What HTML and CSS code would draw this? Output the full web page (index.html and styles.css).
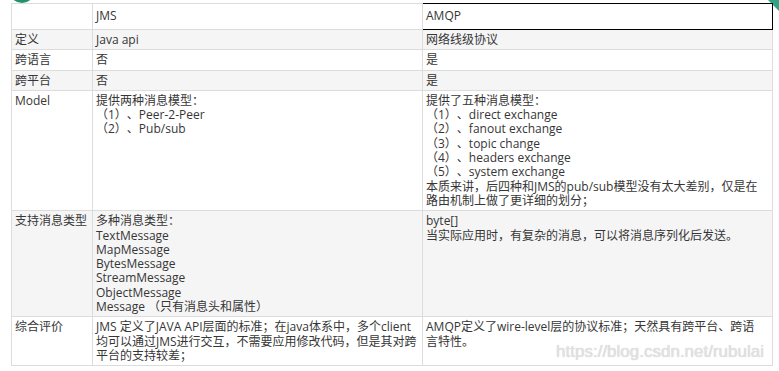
FILE: index.html
```html
<!DOCTYPE html>
<html lang="zh-CN">
<head>
  <meta charset="UTF-8" />
  <meta name="viewport" content="width=device-width, initial-scale=1" />
  <title>JMS vs AMQP</title>
  <link rel="stylesheet" href="styles.css">
</head>
<body>
  <!-- bits of the page around the table -->
  <div class="dot-left"></div>
  <div class="corner-right"></div>

  <div class="wrap">
    <table class="cmp">
      <colgroup>
        <col class="c-label">
        <col class="c-jms">
        <col class="c-amqp">
      </colgroup>
      <tr class="head">
        <td></td>
        <td>JMS</td>
        <td class="picked">AMQP</td>
      </tr>
      <tr>
        <td>定义</td>
        <td>Java api</td>
        <td>网络线级协议</td>
      </tr>
      <tr>
        <td>跨语言</td>
        <td>否</td>
        <td>是</td>
      </tr>
      <tr>
        <td>跨平台</td>
        <td>否</td>
        <td>是</td>
      </tr>
      <tr>
        <td>Model</td>
        <td>提供两种消息模型：<br>（1）、Peer-2-Peer<br>（2）、Pub/sub</td>
        <td>提供了五种消息模型：<br>（1）、direct exchange<br>（2）、fanout exchange<br>（3）、topic change<br>（4）、headers exchange<br>（5）、system exchange<br>本质来讲，后四种和JMS的pub/sub模型没有太大差别，仅是在<br>路由机制上做了更详细的划分；</td>
      </tr>
      <tr>
        <td>支持消息类型</td>
        <td>多种消息类型：<br>TextMessage<br>MapMessage<br>BytesMessage<br>StreamMessage<br>ObjectMessage<br>Message （只有消息头和属性）</td>
        <td>byte[]<br>当实际应用时，有复杂的消息，可以将消息序列化后发送。</td>
      </tr>
      <tr>
        <td>综合评价</td>
        <td>JMS 定义了JAVA API层面的标准；在java体系中，多个client<br>均可以通过JMS进行交互，不需要应用修改代码，但是其对跨<br>平台的支持较差；</td>
        <td>AMQP定义了wire-level层的协议标准；天然具有跨平台、跨语<br>言特性。</td>
      </tr>
    </table>
    <div class="watermark">https://blog.csdn.net/rubulai</div>
  </div>
</body>
</html>
```

FILE: styles.css
```css
body {
  margin: 0;
  background: #fff;
  font-family: 'Open Sans', 'Noto Sans CJK SC', sans-serif;
  font-size: 12px;
  color: #363636;
  overflow: hidden;
  text-spacing-trim: space-all;
}

/* --- page leftovers --- */
.dot-left {
  position: absolute;
  left: 9px; top: -23px;
  width: 26px; height: 26px;
  border-radius: 50%;
  background: #23906f;
}
.corner-right {
  position: absolute;
  right: 0; top: 0;
  width: 11px; height: 11px;
  background: #2fa383;
  clip-path: polygon(0 0, 100% 0, 100% 100%);
}

/* --- Table --- */
.wrap {
  position: relative;
  padding: 3px 0 0 11px;
  width: 761px;
}
.cmp {
  border-collapse: collapse;
  table-layout: fixed;
  width: 761px;
}
.c-label { width: 81px; }
.c-jms { width: 330px; }
.c-amqp { width: 350px; }

.cmp td {
  border: 1px solid #dcdcdc;
  padding: 3px 3px 2px;
  line-height: 14.3px;
  vertical-align: top;
  white-space: nowrap;
  overflow: hidden;
}
.cmp tr:nth-child(even) td { background: #f5f5f5; }
.cmp .head td {
  height: 18px;
  padding-top: 5px;
}
.cmp td.picked {
  border-top: 1px solid #000;
  border-right: 1px solid #000;
  border-bottom: 1px solid #000;
}

.watermark {
  position: absolute;
  right: 8px; bottom: 4px;
  font-family: 'Liberation Sans', Arial, sans-serif;
  font-size: 17px;
  color: #e2e2e2;
  text-shadow: 0 0 1px #c8c8c8;
  pointer-events: none;
}
```
